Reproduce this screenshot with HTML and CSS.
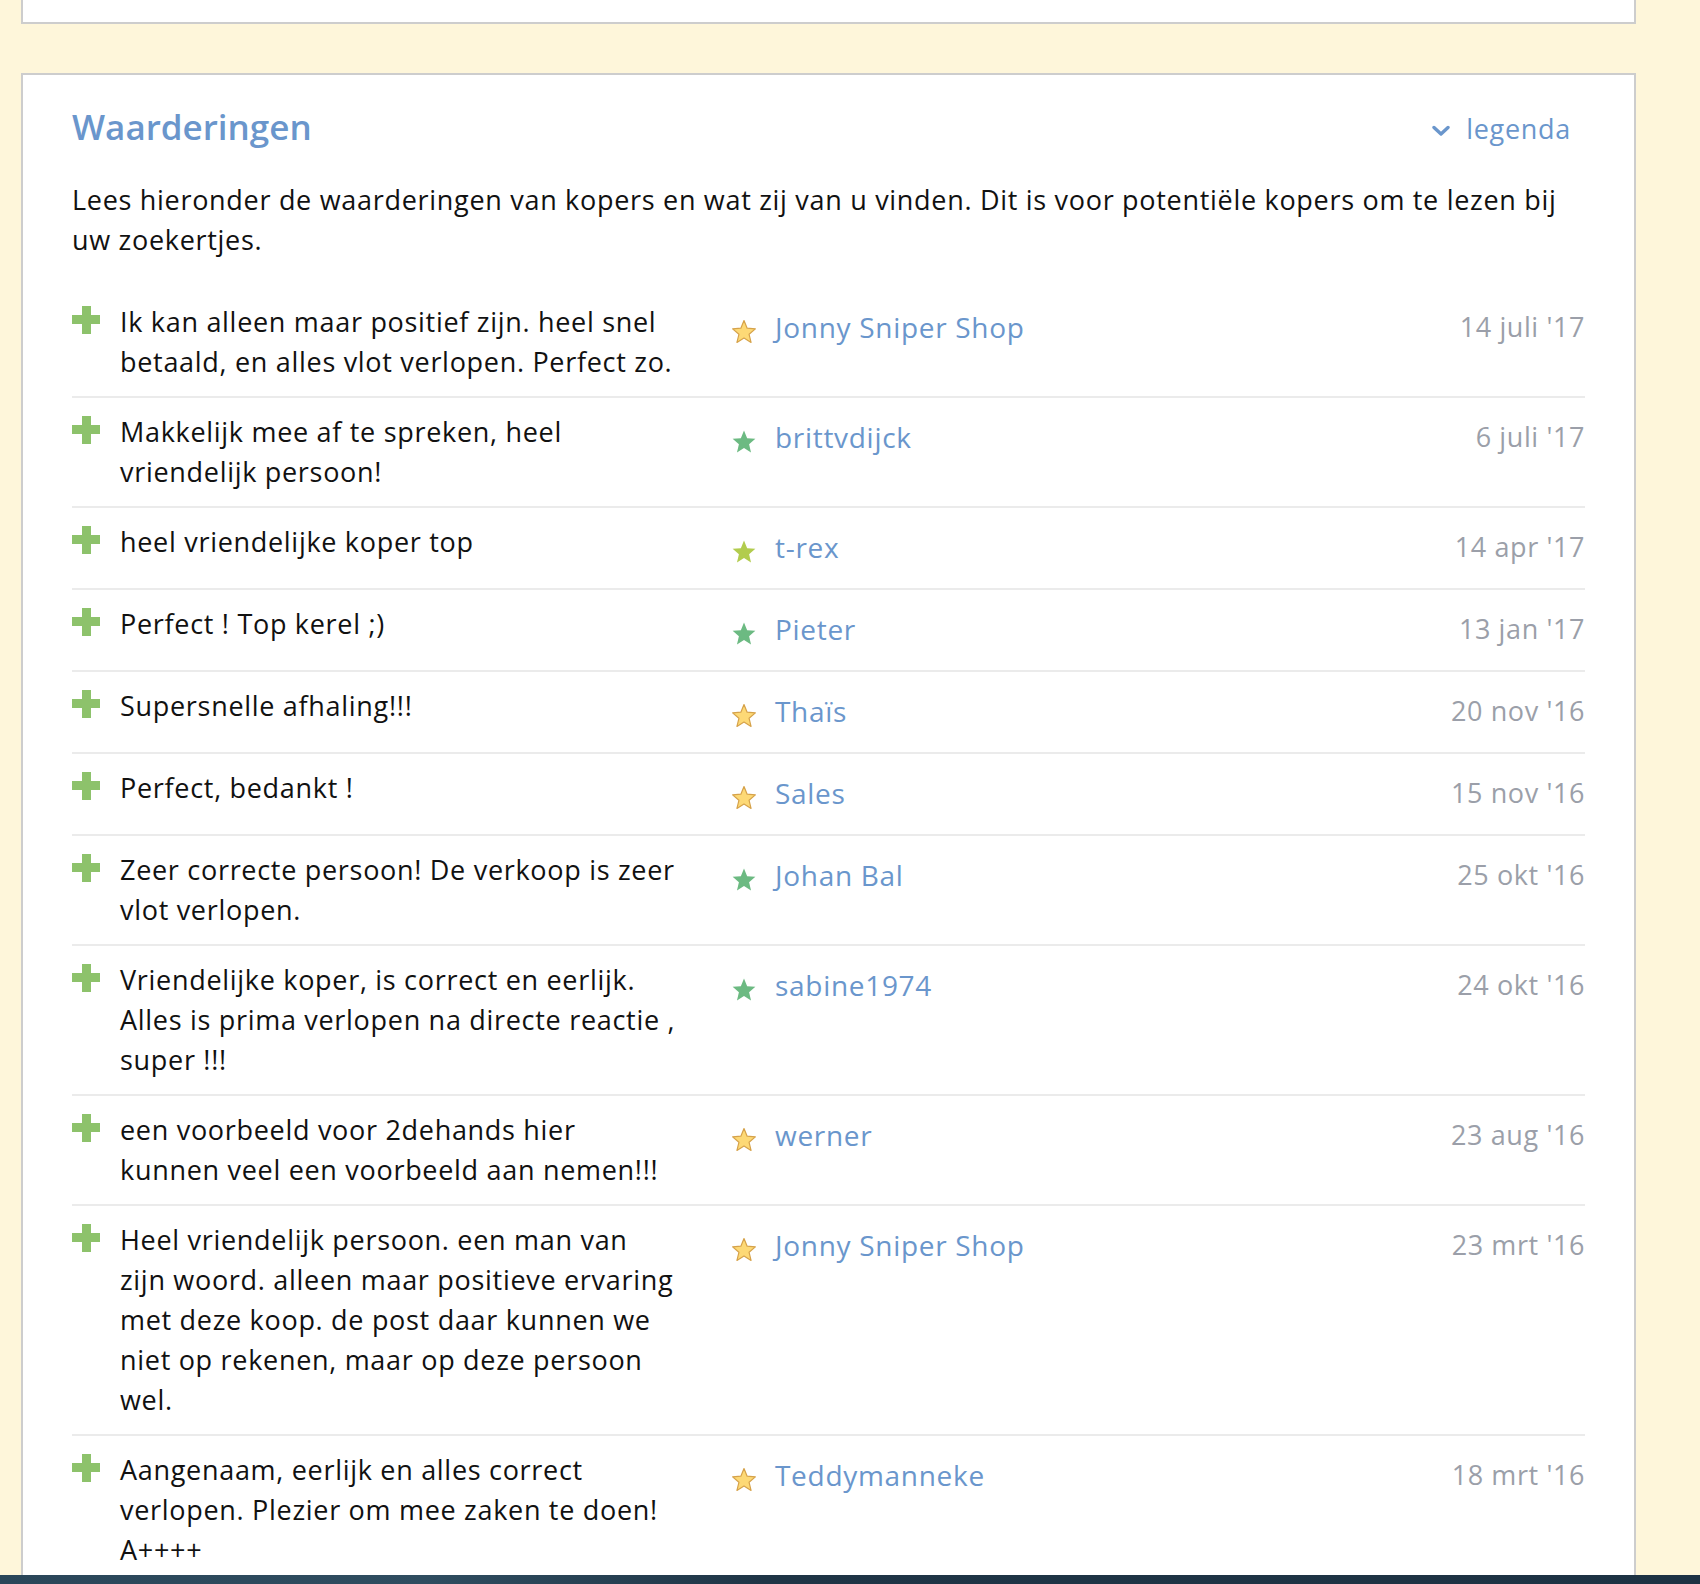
FILE: index.html
```html
<!DOCTYPE html>
<html lang="nl">
<head>
<meta charset="utf-8">
<title>Waarderingen</title>
<link rel="stylesheet" href="styles.css">
</head>
<body>
<div class="page">
  <div class="card card-top"></div>
  <section class="card card-reviews">
    <header class="card-head">
      <h2 class="title">Waarderingen</h2>
      <a class="legend" href="#"><svg class="chev" width="18" height="12" viewBox="0 0 18 12"><path d="M2 2.5 L9 9 L16 2.5" fill="none" stroke="#6a96cc" stroke-width="3.4" stroke-linecap="round" stroke-linejoin="round"/></svg>legenda</a>
    </header>
    <p class="intro">Lees hieronder de waarderingen van kopers en wat zij van u vinden. Dit is voor potentiële kopers om te lezen bij uw zoekertjes.</p>
    <ul class="reviews">
      <li class="review"><span class="plus"></span><p class="text">Ik kan alleen maar positief zijn. heel snel betaald, en alles vlot verlopen. Perfect zo.</p><div class="meta"><svg class="star" viewBox="0 0 24 24"><use href="#star-y"/></svg><a class="name" href="#">Jonny Sniper Shop</a></div><span class="date">14 juli '17</span></li>
      <li class="review"><span class="plus"></span><p class="text">Makkelijk mee af te spreken, heel vriendelijk persoon!</p><div class="meta"><svg class="star" viewBox="0 0 24 24"><use href="#star-g"/></svg><a class="name" href="#">brittvdijck</a></div><span class="date">6 juli '17</span></li>
      <li class="review"><span class="plus"></span><p class="text">heel vriendelijke koper top</p><div class="meta"><svg class="star" viewBox="0 0 24 24"><use href="#star-l"/></svg><a class="name" href="#">t-rex</a></div><span class="date">14 apr '17</span></li>
      <li class="review"><span class="plus"></span><p class="text">Perfect ! Top kerel ;)</p><div class="meta"><svg class="star" viewBox="0 0 24 24"><use href="#star-g"/></svg><a class="name" href="#">Pieter</a></div><span class="date">13 jan '17</span></li>
      <li class="review"><span class="plus"></span><p class="text">Supersnelle afhaling!!!</p><div class="meta"><svg class="star" viewBox="0 0 24 24"><use href="#star-y"/></svg><a class="name" href="#">Thaïs</a></div><span class="date">20 nov '16</span></li>
      <li class="review"><span class="plus"></span><p class="text">Perfect, bedankt !</p><div class="meta"><svg class="star" viewBox="0 0 24 24"><use href="#star-y"/></svg><a class="name" href="#">Sales</a></div><span class="date">15 nov '16</span></li>
      <li class="review"><span class="plus"></span><p class="text">Zeer correcte persoon! De verkoop is zeer vlot verlopen.</p><div class="meta"><svg class="star" viewBox="0 0 24 24"><use href="#star-g"/></svg><a class="name" href="#">Johan Bal</a></div><span class="date">25 okt '16</span></li>
      <li class="review"><span class="plus"></span><p class="text">Vriendelijke koper, is correct en eerlijk. Alles is prima verlopen na directe reactie , super !!!</p><div class="meta"><svg class="star" viewBox="0 0 24 24"><use href="#star-g"/></svg><a class="name" href="#">sabine1974</a></div><span class="date">24 okt '16</span></li>
      <li class="review"><span class="plus"></span><p class="text">een voorbeeld voor 2dehands hier kunnen veel een voorbeeld aan nemen!!!</p><div class="meta"><svg class="star" viewBox="0 0 24 24"><use href="#star-y"/></svg><a class="name" href="#">werner</a></div><span class="date">23 aug '16</span></li>
      <li class="review"><span class="plus"></span><p class="text">Heel vriendelijk persoon. een man van zijn woord. alleen maar positieve ervaring met deze koop. de post daar kunnen we niet op rekenen, maar op deze persoon wel.</p><div class="meta"><svg class="star" viewBox="0 0 24 24"><use href="#star-y"/></svg><a class="name" href="#">Jonny Sniper Shop</a></div><span class="date">23 mrt '16</span></li>
      <li class="review"><span class="plus"></span><p class="text">Aangenaam, eerlijk en alles correct verlopen. Plezier om mee zaken te doen! A++++</p><div class="meta"><svg class="star" viewBox="0 0 24 24"><use href="#star-y"/></svg><a class="name" href="#">Teddymanneke</a></div><span class="date">18 mrt '16</span></li>
    </ul>
  </section>
</div>
<div class="footer-bar"></div>
<svg width="0" height="0" class="defs">
  <defs>
    <path id="star-shape" d="M12 1.4 L14.9 8.5 L22.5 9.1 L16.7 14.1 L18.5 21.6 L12 17.6 L5.5 21.6 L7.3 14.1 L1.5 9.1 L9.1 8.5 Z"/>
    <g id="star-y"><use href="#star-shape" fill="#fdd976" stroke="#d6a24a" stroke-width="1.1" stroke-linejoin="round"/></g>
    <g id="star-g"><use href="#star-shape" fill="#6cba82"/></g>
    <g id="star-l"><use href="#star-shape" fill="#b2cc4e"/></g>
  </defs>
</svg>
</body>
</html>
```
FILE: styles.css
```css
html, body {
  margin: 0;
  padding: 0;
  background: #fef6da;
}
body {
  font-family: "Open Sans", "Liberation Sans", sans-serif;
  color: #111;
}
.page {
  height: 1575px;
  overflow: hidden;
  padding: 0 0 0 21px;
  box-sizing: border-box;
}
.card {
  width: 1615px;
  box-sizing: border-box;
  background: #fff;
  border: 2px solid #cdcdcd;
}
.card-top {
  height: 24px;
  border-top: none;
}
.card-reviews {
  margin-top: 49px;
  padding: 28px 49px 0 49px;
}
.card-head {
  display: flex;
  justify-content: space-between;
  align-items: center;
  height: 48px;
}
.title {
  margin: 0;
  font-size: 35px;
  font-weight: 600;
  color: #6a96cc;
  line-height: 48px;
}
.legend {
  display: flex;
  align-items: center;
  gap: 16px;
  color: #6a96cc;
  text-decoration: none;
  font-size: 27px;
  letter-spacing: 0.7px;
  line-height: 40px;
  margin-right: 14px;
  margin-top: 4px;
}
.chev { display: block; margin-top: 4px; }
.intro {
  margin: 29px 0 0 0;
  font-size: 27px;
  letter-spacing: 0.7px;
  line-height: 40px;
}
.reviews {
  list-style: none;
  margin: 28px 0 0 0;
  padding: 0;
}
.review {
  display: grid;
  grid-template-columns: 48px 612px 1fr auto;
  align-items: start;
  padding: 14px 0;
  border-bottom: 2px solid #ebebeb;
}
.plus {
  position: relative;
  width: 28px;
  height: 28px;
  margin-top: 4px;
}
.plus::before, .plus::after {
  content: "";
  position: absolute;
  background: #8dc26b;
}
.plus::before { left: 10px; top: 0; width: 9px; height: 28px; }
.plus::after { left: 0; top: 9px; width: 28px; height: 9px; }
.text {
  margin: 0;
  font-size: 27px;
  letter-spacing: 0.7px;
  line-height: 40px;
  max-width: 560px;
}
.meta {
  display: flex;
  align-items: flex-start;
  min-height: 52px;
}
.star {
  width: 26px;
  height: 26px;
  margin-top: 17px;
  margin-right: 18px;
  margin-left: -1px;
  flex: none;
}
.name {
  color: #6a96cc;
  text-decoration: none;
  font-size: 28px;
  letter-spacing: 0.7px;
  line-height: 40px;
  padding-top: 5px;
}
.date {
  color: #9b9fa9;
  font-size: 27px;
  letter-spacing: 0.6px;
  line-height: 40px;
  padding-top: 5px;
  text-align: right;
}
.footer-bar {
  height: 9px;
  background: linear-gradient(90deg, #2a4659 0%, #2f4d60 25%, #1f3546 45%, #1d3243 100%);
}
.defs { position: absolute; }
```
